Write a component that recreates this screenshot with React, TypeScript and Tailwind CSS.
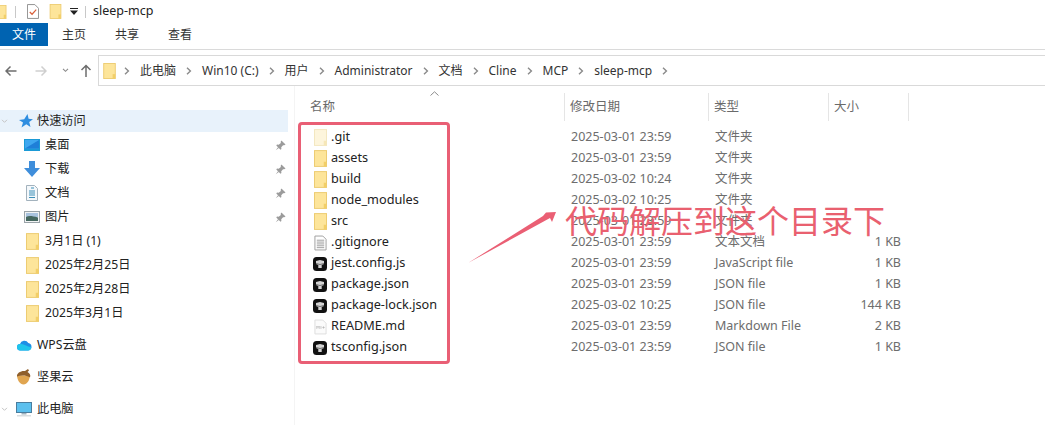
import React from "react";

const FONT = "font-['Noto_Sans','Noto_Sans_CJK_SC',sans-serif]";

const Folder = ({ className = "", pale = false }: { className?: string; pale?: boolean }) => (
  <svg viewBox="0 0 14 18" className={className} fill="none">
    <rect x="0.5" y="0.5" width="13" height="17" fill={pale ? "#fdf5dc" : "#fde59a"} stroke={pale ? "#f3e6bd" : "#ecca6c"} />
    <path d="M10.5 17.5V12.5H13.5V17.5Z" fill={pale ? "#f6e7b8" : "#f2cf68"} />
  </svg>
);

const NodeIcon = () => (
  <svg viewBox="0 0 14 14" className="w-[14px] h-[14px]">
    <rect width="14" height="14" rx="3.5" fill="#111" />
    <path d="M3 4 7 3l4 1v3L8.700 8v3H5.300V8L3 7Z" fill="#d4d4d4" />
    <path d="M3 6.500 7 7.500l4-1" stroke="#555" strokeWidth="0.8" fill="none" />
  </svg>
);

const TextDoc = () => (
  <svg viewBox="0 0 14 16" className="w-[13px] h-[16px]" fill="none">
    <path d="M1 .5h8.5L13 4v11.5H1Z" fill="#fff" stroke="#9a9a9a" />
    <path d="M3 5h8M3 7h8M3 9h8M3 11h8M3 13h8" stroke="#9a9a9a" />
  </svg>
);

const MdDoc = () => (
  <svg viewBox="0 0 14 16" className="w-[13px] h-[16px]" fill="none">
    <path d="M1 .5h8.5L13 4v11.5H1Z" fill="#fbfbfb" stroke="#dcdcdc" />
    <path d="M3 10V7l1.300 1.500L5.600 7v3M7.500 7v3M9 8.500h2.500M10.200 7.300v2.400" stroke="#b5b5b5" strokeWidth="0.8" />
  </svg>
);

const Chevron = () => (
  <svg viewBox="0 0 6 8" className="w-[6px] h-[8px] shrink-0" fill="none">
    <path d="M1 .8 4.400 4 1 7.200" stroke="#8a8a8a" strokeWidth="1.400" />
  </svg>
);

const Pin = () => (
  <svg viewBox="0 0 12 12" className="w-[11px] h-[11px]" fill="#9b9b9b">
    <path d="M7 .5 11.500 5 10 5.800 8.800 5.600 6.800 8l.2 1.800-1 .8-4.600-4.600.8-1 1.800.2 2.400-2L6.200 2Z" />
    <path d="M3.500 7.500.8 11.200l3.700-2.700Z" />
  </svg>
);

const Desktop = () => (
  <svg viewBox="0 0 16 12" className="w-[16px] h-[12px]">
    <rect width="16" height="12" fill="#1b9ad6" />
    <rect x="1" y="1" width="14" height="8.500" fill="#3fa7f0" />
    <path d="M1 9.500 15 1v8.500Z" fill="#1f7fd8" />
  </svg>
);

const Download = () => (
  <svg viewBox="0 0 16 16" className="w-[16px] h-[16px]">
    <path d="M5 0h6v7h5l-8 9-8-9h5Z" fill="#3f8edb" />
  </svg>
);

const DocsIcon = () => (
  <svg viewBox="0 0 12 16" className="w-[12px] h-[16px]" fill="none">
    <path d="M.5.500h8l3 3v12H.5Z" fill="#f4f8fb" stroke="#a3b2bd" />
    <path d="M5 3h3M3 6h6M3 8h6M3 10h6M3 12.500h6" stroke="#3c8fb8" />
  </svg>
);

const Pictures = () => (
  <svg viewBox="0 0 16 12" className="w-[16px] h-[12px]">
    <rect x="0.500" y="0.500" width="15" height="11" fill="#f1f3f4" stroke="#9aa3a8" />
    <rect x="2" y="2" width="12" height="4" fill="#a9c3de" />
    <path d="M2 6c3-1.500 6-1 12 .5V10H2Z" fill="#45685f" />
  </svg>
);

const Cloud = () => (
  <svg viewBox="0 0 15 12" className="w-[15px] h-[12px]">
    <path d="M3.500 11.500a3.200 3.200 0 0 1-.5-6.400A4.500 4.500 0 0 1 11.300 4a3.800 3.800 0 0 1 0 7.500Z" fill="#1d8fe6" />
    <path d="M3.500 11.500a3.200 3.200 0 0 1-.5-6.400c3-.2 5 1.500 11.500 3.500a3.800 3.800 0 0 1-3.200 2.900Z" fill="#1fc4ec" />
  </svg>
);

const Acorn = () => (
  <svg viewBox="0 0 17 16" className="w-[17px] h-[16px]">
    <path d="M1 6c0 5 3 9.500 6.500 9.500S14 11 13.500 7Z" fill="#e0a550" />
    <path d="M1 7.500C.5 4 5 1.500 9 2l3-2 1 1.500-1.500 1.500c2 1 3.500 3 2.500 5.500C10 6 5 6 1 7.500Z" fill="#8f5f2c" />
  </svg>
);

const Monitor = () => (
  <svg viewBox="0 0 16 15" className="w-[16px] h-[15px]">
    <rect width="16" height="11" fill="#4a7d9e" />
    <rect x="1" y="1" width="14" height="9" fill="#5cc0ee" />
    <rect x="5.500" y="11" width="5" height="1.500" fill="#9db1bd" />
    <rect x="1" y="13" width="14" height="1.500" fill="#d8dde0" />
  </svg>
);

const Star = () => (
  <svg viewBox="0 0 14 14" className="w-[14px] h-[14px]">
    <path d="M8.500 0 9.600 4.800 14 5.200 10.200 8 11.500 13 7.300 10.300 2.500 13.500 4 8.600 0 6 5.200 5.200Z" fill="#2f8ee0" />
  </svg>
);

const crumbs = ["此电脑", "Win10 (C:)", "用户", "Administrator", "文档", "Cline", "MCP", "sleep-mcp"];

const pinned = [
  { name: "桌面", icon: <Desktop /> },
  { name: "下载", icon: <Download /> },
  { name: "文档", icon: <DocsIcon /> },
  { name: "图片", icon: <Pictures /> },
];

const recent = ["3月1日 (1)", "2025年2月25日", "2025年2月28日", "2025年3月1日"];

const files = [
  { name: ".git", date: "2025-03-01 23:59", type: "文件夹", size: "", icon: <Folder pale className="w-[13px] h-[17px]" /> },
  { name: "assets", date: "2025-03-01 23:59", type: "文件夹", size: "", icon: <Folder className="w-[13px] h-[17px]" /> },
  { name: "build", date: "2025-03-02 10:24", type: "文件夹", size: "", icon: <Folder className="w-[13px] h-[17px]" /> },
  { name: "node_modules", date: "2025-03-02 10:25", type: "文件夹", size: "", icon: <Folder className="w-[13px] h-[17px]" /> },
  { name: "src", date: "2025-03-01 23:59", type: "文件夹", size: "", icon: <Folder className="w-[13px] h-[17px]" /> },
  { name: ".gitignore", date: "2025-03-01 23:59", type: "文本文档", size: "1 KB", icon: <TextDoc /> },
  { name: "jest.config.js", date: "2025-03-01 23:59", type: "JavaScript file", size: "1 KB", icon: <NodeIcon /> },
  { name: "package.json", date: "2025-03-01 23:59", type: "JSON file", size: "1 KB", icon: <NodeIcon /> },
  { name: "package-lock.json", date: "2025-03-02 10:25", type: "JSON file", size: "144 KB", icon: <NodeIcon /> },
  { name: "README.md", date: "2025-03-01 23:59", type: "Markdown File", size: "2 KB", icon: <MdDoc /> },
  { name: "tsconfig.json", date: "2025-03-01 23:59", type: "JSON file", size: "1 KB", icon: <NodeIcon /> },
];

export default function App() {
  return (
    <div className={`relative w-[1045px] h-[425px] overflow-hidden bg-white text-[#222] text-[12.5px] ${FONT}`}>
      {/* title bar */}
      <div className="h-[23px] flex items-center">
        <Folder className="w-[12px] h-[14px] ml-[-5px] shrink-0" />
        <div className="w-px h-[12px] bg-[#c8c8c8] ml-[8px]" />
        <svg viewBox="0 0 13 16" className="w-[12px] h-[15px] ml-[11px]" fill="none">
          <path d="M.5.500h8l4 4v11H.5Z" fill="#fff" stroke="#8a8a8a" />
          <path d="M3 8.500 5.500 11 10 6" stroke="#d9603b" strokeWidth="1.300" />
        </svg>
        <Folder className="w-[13px] h-[15px] ml-[10px]" />
        <svg viewBox="0 0 8 7" className="w-[8px] h-[7px] ml-[8px]">
          <path d="M0 0h8v1H0ZM0 2.500h8L4 7Z" fill="#222" />
        </svg>
        <div className="w-px h-[12px] bg-[#c8c8c8] ml-[7px]" />
        <span className="ml-[7px] text-[12.5px]">sleep-mcp</span>
      </div>

      {/* ribbon tabs */}
      <div className="h-[27px] flex items-start border-b border-[#dadada] text-[12px]">
        <div className="w-[48px] h-[23px] bg-[#0063b1] text-white flex items-center justify-center">文件</div>
        <div className="flex h-[24px] items-center gap-[29px] ml-[14px] text-[#333]">
          <span>主页</span>
          <span>共享</span>
          <span>查看</span>
        </div>
      </div>

      {/* address row */}
      <div className="h-[36px] pt-[5px] flex items-start">
        <div className="w-[98px] h-[31px] flex items-center shrink-0">
          <svg viewBox="0 0 12 12" className="w-[12px] h-[12px] ml-[5px]" fill="none">
            <path d="M11.500 6H1M5.500 1.500 1 6l4.500 4.500" stroke="#6d6d6d" strokeWidth="1.500" />
          </svg>
          <svg viewBox="0 0 12 12" className="w-[12px] h-[12px] ml-[18px]" fill="none">
            <path d="M.5 6H11M6.500 1.500 11 6l-4.500 4.500" stroke="#cfcfcf" strokeWidth="1.500" />
          </svg>
          <svg viewBox="0 0 8 6" className="w-[7px] h-[5px] ml-[15px]" fill="none">
            <path d="M1 1l3 3 3-3" stroke="#8a8a8a" strokeWidth="1.300" />
          </svg>
          <svg viewBox="0 0 12 13" className="w-[12px] h-[13px] ml-[11px]" fill="none">
            <path d="M6 13V1.500M1.500 6 6 1.500 10.500 6" stroke="#6d6d6d" strokeWidth="1.500" />
          </svg>
        </div>
        <div className="flex-1 h-[31px] border border-r-0 border-[#d9d9d9] flex items-center pl-[4px] text-[12px] text-[#333]">
          <Folder className="w-[13px] h-[16px] shrink-0" />
          <div className="flex items-center ml-[8px] gap-[10px]">
            <Chevron />
            {crumbs.map((c) => (
              <React.Fragment key={c}>
                <span className="whitespace-nowrap">{c}</span>
                <Chevron />
              </React.Fragment>
            ))}
          </div>
        </div>
      </div>

      <div className="flex h-[339px]">
        {/* sidebar */}
        <div className="w-[295px] shrink-0 border-r border-[#f4f4f4] pt-[24px] pr-[6px] text-[12.2px]">
          <div className="h-[22px] bg-[#e8f2fb] flex items-center">
            <svg viewBox="0 0 8 6" className="w-[7px] h-[5px] ml-[1px]" fill="none">
              <path d="M1 1l3 3 3-3" stroke="#c4c4c4" strokeWidth="1.200" />
            </svg>
            <div className="ml-[11px]"><Star /></div>
            <span className="ml-[4px]">快速访问</span>
          </div>
          <div className="pt-[1px]">
            {pinned.map((p) => (
              <div key={p.name} className="h-[24px] flex items-center">
                <div className="w-[16px] ml-[24px] flex justify-center">{p.icon}</div>
                <span className="ml-[5px] flex-1">{p.name}</span>
                <div className="mr-[2px]"><Pin /></div>
              </div>
            ))}
            {recent.map((r) => (
              <div key={r} className="h-[24px] flex items-center">
                <Folder className="w-[13px] h-[17px] ml-[26px]" />
                <span className="ml-[6px]">{r}</span>
              </div>
            ))}
          </div>
          <div className="h-[24px] mt-[8px] flex items-center">
            <div className="ml-[17px]"><Cloud /></div>
            <span className="ml-[5px]">WPS云盘</span>
          </div>
          <div className="h-[24px] mt-[8px] flex items-center">
            <div className="ml-[16px]"><Acorn /></div>
            <span className="ml-[4px]">坚果云</span>
          </div>
          <div className="h-[24px] mt-[8px] flex items-center">
            <svg viewBox="0 0 8 6" className="w-[7px] h-[5px] ml-[1px]" fill="none">
              <path d="M1 1l3 3 3-3" stroke="#c4c4c4" strokeWidth="1.200" />
            </svg>
            <div className="ml-[8px]"><Monitor /></div>
            <span className="ml-[5px]">此电脑</span>
          </div>
        </div>

        {/* file list */}
        <div className="flex-1">
          <div className="relative h-[28px] mt-[7px] flex text-[#6a6a6a]">
            <div className="w-[270px] pl-[15px] flex items-center border-r border-[#e5e5e5]">名称</div>
            <div className="w-[144px] pl-[5px] flex items-center border-r border-[#e5e5e5]">修改日期</div>
            <div className="w-[120px] pl-[5px] flex items-center border-r border-[#e5e5e5]">类型</div>
            <div className="w-[80px] pl-[5px] flex items-center border-r border-[#e5e5e5]">大小</div>
            <svg viewBox="0 0 9 5" className="absolute left-[135px] top-[-2px] w-[9px] h-[5px]" fill="none">
              <path d="M.5 4.500 4.500.8l4 3.700" stroke="#8c8c8c" />
            </svg>
          </div>
          <div className="pt-[6px]">
            {files.map((f) => (
              <div key={f.name} className="h-[21px] flex items-center">
                <div className="w-[270px] flex items-center">
                  <div className="w-[14px] ml-[18px] flex justify-center shrink-0">{f.icon}</div>
                  <span className="ml-[4px] pb-[2px] text-[12.7px] text-[#222]">{f.name}</span>
                </div>
                <div className="w-[144px] pl-[6px] text-[#6d6d6d]">{f.date}</div>
                <div className="w-[106px] pl-[6px] text-[#6d6d6d] whitespace-nowrap">{f.type}</div>
                <div className="w-[86px] text-right text-[#6d6d6d]">{f.size}</div>
              </div>
            ))}
          </div>
        </div>
      </div>

      {/* annotation over the list */}
      <div className="absolute left-[298px] top-[122px] w-[152px] h-[242px] border-[3px] border-[#e95f75] rounded-[4px]" />
      <svg viewBox="0 0 1045 425" className="absolute inset-0 w-[1045px] h-[425px] pointer-events-none">
        <path d="M468 263 543 216 546 212.500 556 212 552 222 550 218Z" fill="#ea5f74" />
      </svg>
      <div className="absolute left-[565px] top-[196px] text-[32px] leading-[46px] text-[#e9606f] whitespace-nowrap font-['Noto_Sans_CJK_SC',sans-serif] font-normal">
        代码解压到这个目录下
      </div>
    </div>
  );
}
